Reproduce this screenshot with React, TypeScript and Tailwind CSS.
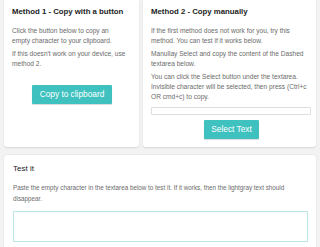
export default function App() {
    return (
        <div className="h-[247px] overflow-hidden bg-[#f3f3f3] px-1 font-['Liberation_Sans',Arial,sans-serif]">
            <div className="flex gap-[4px]">
                <section className="w-[135px] shrink-0 rounded-b-[3px] bg-white pl-[8px] pr-[12px] pt-[6px] h-[147px] shadow-[0_1px_2px_rgba(0,0,0,0.12)]">
                    <h3 className="text-[7.8px] font-bold text-[#222] leading-[12px] whitespace-nowrap">Method 1 - Copy with a button</h3>
                    <p className="mt-[8px] text-[6.6px] leading-[10px] text-[#6b6b6b]">
                        Click the button below to copy an empty character to your clipboard.
                    </p>
                    <p className="mt-[3px] text-[6.6px] leading-[10px] text-[#6b6b6b]">
                        If this doesn't work on your device, use method 2.
                    </p>
                    <div className="mt-[16px] flex justify-center pl-[5px]">
                        <button className="bg-[#3fc2bf] text-white text-[8.3px] w-[80px] h-[19px] rounded-[1px] shadow-[0_1px_1px_rgba(0,0,0,0.15)]">
                            Copy to clipboard
                        </button>
                    </div>
                </section>

                <section className="flex-1 rounded-b-[3px] bg-white pl-[8px] pr-[4px] pt-[6px] h-[147px] shadow-[0_1px_2px_rgba(0,0,0,0.12)]">
                    <h3 className="text-[7.8px] font-bold text-[#222] leading-[12px]">Method 2 - Copy manually</h3>
                    <p className="mt-[8px] text-[6.6px] leading-[10px] text-[#6b6b6b]">
                        If the first method does not work for you, try this method. You can test if it works below.
                    </p>
                    <p className="mt-[3px] text-[6.6px] leading-[10px] text-[#6b6b6b]">
                        Manullay Select and copy the content of the Dashed textarea below.
                    </p>
                    <p className="mt-[3px] text-[6.6px] leading-[10px] text-[#6b6b6b]">
                        You can click the Select button under the textarea. Invisible character will be selected, then press (Ctrl+c OR cmd+c) to copy.
                    </p>
                    <div className="mt-[5px] mr-[1px] h-[8px] border border-[#ddd] rounded-[1px]"></div>
                    <div className="mt-[5px] flex justify-center">
                        <button className="bg-[#3fc2bf] text-white text-[8.3px] w-[55px] h-[19px] rounded-[1px] shadow-[0_1px_1px_rgba(0,0,0,0.15)]">
                            Select Text
                        </button>
                    </div>
                </section>
            </div>

            <section className="mt-[8px] rounded-t-[3px] bg-white pl-[9px] pr-[7px] pt-[8px] shadow-[0_0_2px_rgba(0,0,0,0.12)] h-[120px]">
                <h3 className="text-[8px] text-[#222] leading-[12px]">Test it</h3>
                <p className="mt-[7px] text-[6.3px] leading-[11px] text-[#6b6b6b]">
                    Paste the empty character in the textarea below to test it. If it works, then the lightgray text should disappear.
                </p>
                <div className="mt-[7px] mr-[1px] h-[31px] border border-[#bfe6e6]"></div>
            </section>
        </div>
    )
}
